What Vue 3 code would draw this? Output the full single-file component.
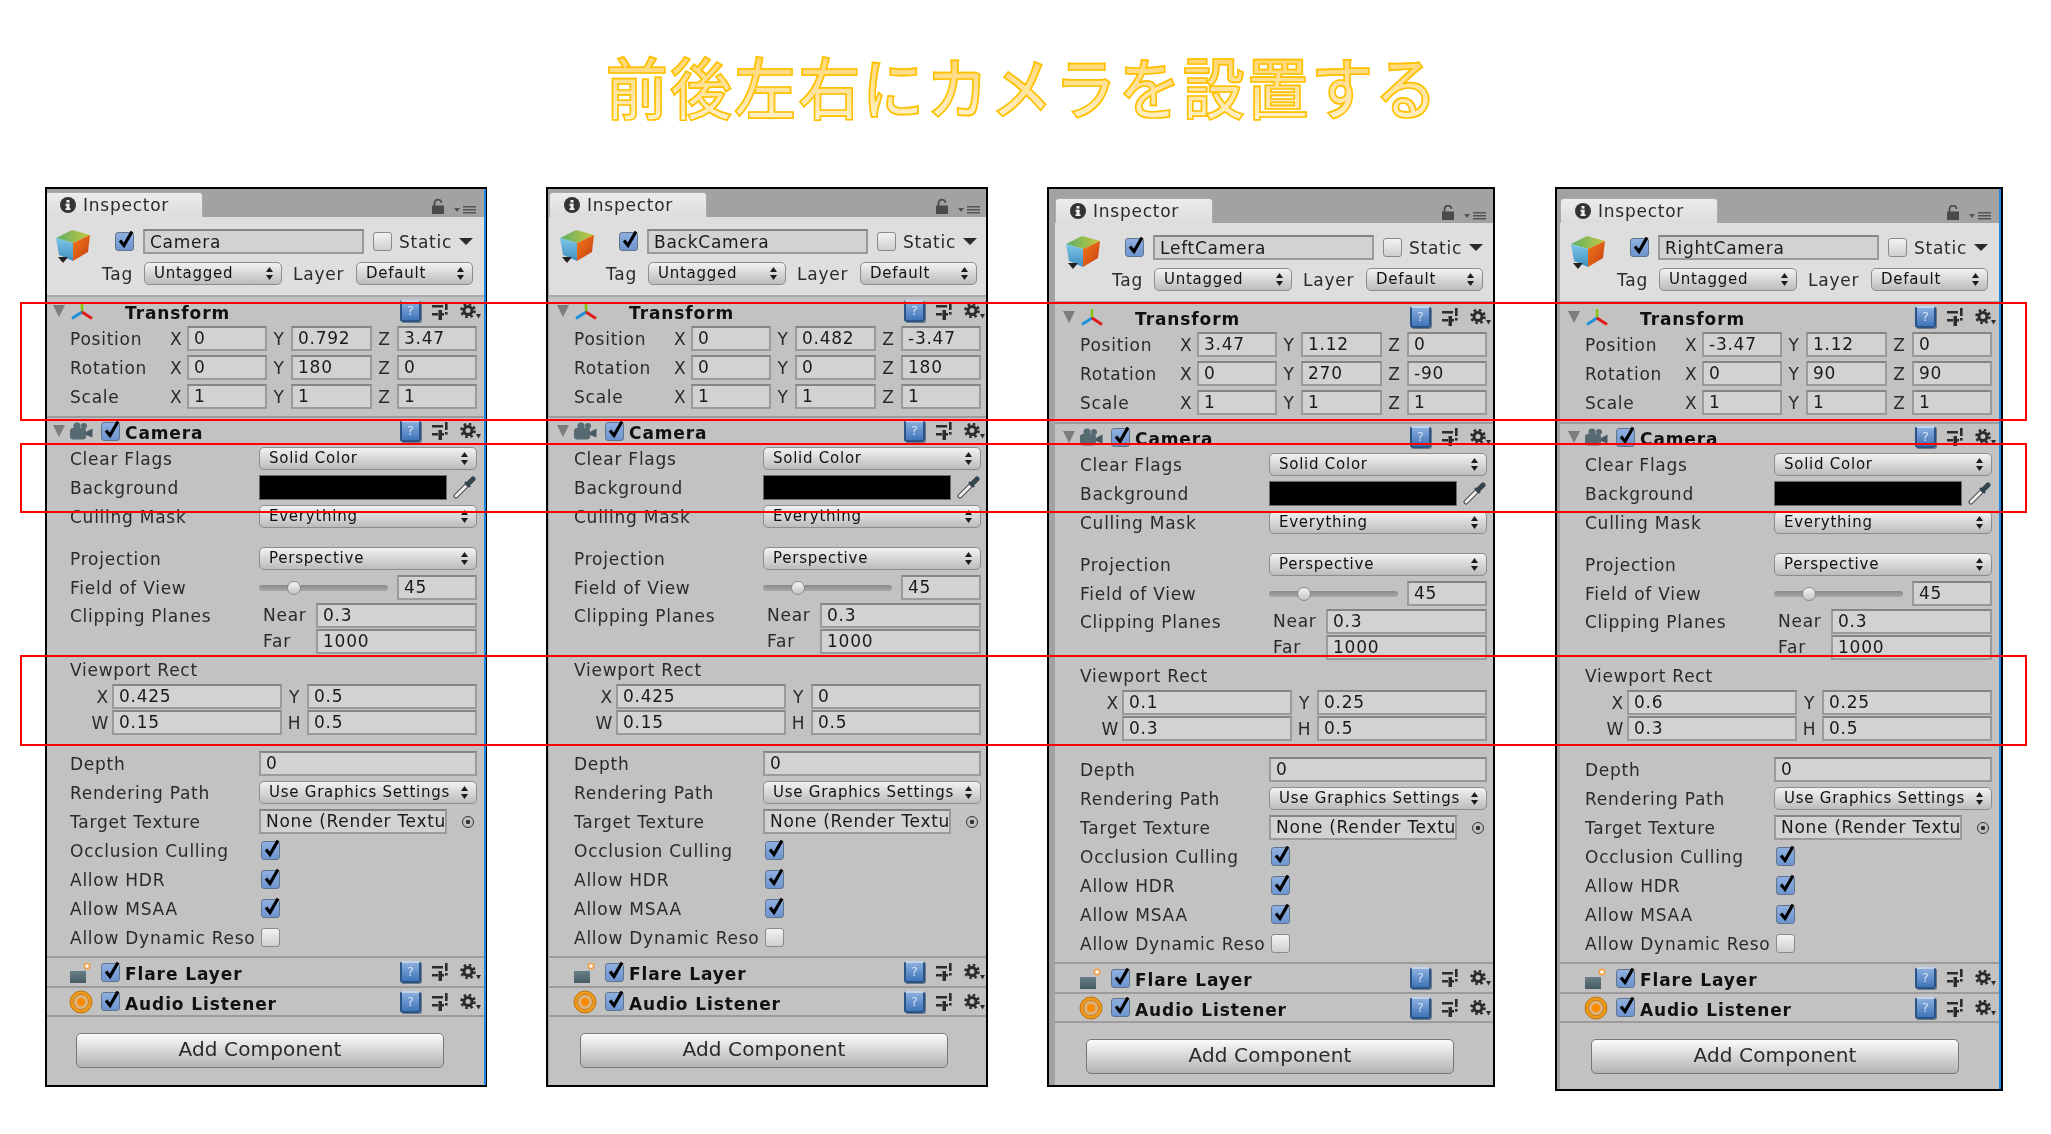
<script setup>
const panels = [
  { cls: 'p1', name: 'Camera', pos: ['0', '0.792', '3.47'], rot: ['0', '180', '0'], rect: ['0.425', '0.5', '0.15', '0.5'] },
  { cls: 'p2', name: 'BackCamera', pos: ['0', '0.482', '-3.47'], rot: ['0', '0', '180'], rect: ['0.425', '0', '0.15', '0.5'] },
  { cls: 'p3', name: 'LeftCamera', pos: ['3.47', '1.12', '0'], rot: ['0', '270', '-90'], rect: ['0.1', '0.25', '0.3', '0.5'] },
  { cls: 'p4', name: 'RightCamera', pos: ['-3.47', '1.12', '0'], rot: ['0', '90', '90'], rect: ['0.6', '0.25', '0.3', '0.5'] },
]
const axes = ['X', 'Y', 'Z']
const vectors = (p) => [
  { label: 'Position', values: p.pos },
  { label: 'Rotation', values: p.rot },
  { label: 'Scale', values: ['1', '1', '1'] },
]
const toggles = [
  { label: 'Occlusion Culling', on: true },
  { label: 'Allow HDR', on: true },
  { label: 'Allow MSAA', on: true },
  { label: 'Allow Dynamic Reso', on: false },
]
</script>

<template>
  <div class="page">
    <svg class="sprite" width="0" height="0">
      <defs>
        <linearGradient id="cubeTop" x1="0" y1="0" x2="1" y2="0"><stop offset="0" stop-color="#5fae6a" /><stop offset="1" stop-color="#c3c83a" /></linearGradient>
        <linearGradient id="cubeLeft" x1="0" y1="0" x2="0" y2="1"><stop offset="0" stop-color="#7cc6e8" /><stop offset="1" stop-color="#3f8fc0" /></linearGradient>
        <linearGradient id="cubeRight" x1="0" y1="0" x2="1" y2="1"><stop offset="0" stop-color="#f07a1c" /><stop offset="1" stop-color="#c93d10" /></linearGradient>
        <linearGradient id="flareBox" x1="0" y1="0" x2="0" y2="1"><stop offset="0" stop-color="#6b7f88" /><stop offset="1" stop-color="#465a62" /></linearGradient>
      </defs>
      <symbol id="cube" viewBox="0 0 35 33">
        <polygon points="1,8 17,0 35,5 18,13" fill="url(#cubeTop)" />
        <polygon points="1,8 18,13 18,31 4,25" fill="url(#cubeLeft)" />
        <polygon points="18,13 35,5 33,22 18,31" fill="url(#cubeRight)" />
        <polygon points="3,27 13,27 8,33" fill="#222" />
      </symbol>
      <symbol id="sliders" viewBox="0 0 16 18">
        <rect x="0" y="3" width="11" height="2.5" fill="#2b2b2b" />
        <rect x="13" y="0" width="2.6" height="8" fill="#2b2b2b" />
        <rect x="13" y="10" width="2.6" height="2.6" fill="#2b2b2b" />
        <rect x="0" y="11" width="6" height="2.5" fill="#2b2b2b" />
        <rect x="6.5" y="8" width="3.5" height="10" fill="#2b2b2b" />
        <rect x="10" y="11" width="2" height="2.5" fill="#2b2b2b" />
      </symbol>
      <symbol id="gear" viewBox="0 0 21 16">
        <circle cx="8" cy="7.5" r="4" fill="none" stroke="#2b2b2b" stroke-width="3" />
        <circle cx="8" cy="7.5" r="6.5" fill="none" stroke="#2b2b2b" stroke-width="2.6" stroke-dasharray="2.5 2.6" />
        <polygon points="16,11 21,11 18.5,15.5" fill="#2b2b2b" />
      </symbol>
      <symbol id="axes" viewBox="0 0 22 18">
        <line x1="11" y1="1" x2="11" y2="10" stroke="#86c400" stroke-width="2.4" />
        <line x1="11" y1="10" x2="1" y2="16.5" stroke="#1d8fe0" stroke-width="2.8" />
        <line x1="11" y1="10" x2="21" y2="16.5" stroke="#e01818" stroke-width="2.8" />
      </symbol>
      <symbol id="cam" viewBox="0 0 24 18">
        <circle cx="8" cy="4" r="3.6" fill="#566a72" />
        <circle cx="15" cy="4" r="3" fill="#566a72" />
        <rect x="1" y="6" width="16" height="11.5" rx="3" fill="#566a72" />
        <polygon points="17,10 23.5,6.5 23.5,15.5 17,13" fill="#465a62" />
      </symbol>
      <symbol id="flare" viewBox="0 0 21 21">
        <rect x="0" y="9" width="16" height="12" fill="url(#flareBox)" />
        <circle cx="17" cy="4" r="3.6" fill="#f2a04a" />
        <circle cx="17" cy="4" r="1.8" fill="#fff" />
      </symbol>
      <symbol id="audio" viewBox="0 0 24 24">
        <circle cx="12" cy="12" r="11" fill="#f09a1c" stroke="#b9760f" stroke-width="1" />
        <circle cx="12" cy="12" r="7.6" fill="#dcb27a" stroke="#c47f20" stroke-width="1" />
        <circle cx="12" cy="12" r="4" fill="#ff8a00" />
      </symbol>
      <symbol id="dropper" viewBox="0 0 23 23">
        <line x1="3" y1="20" x2="14" y2="9" stroke="#555" stroke-width="5" stroke-linecap="round" />
        <line x1="3" y1="20" x2="14" y2="9" stroke="#f2f2f2" stroke-width="2.6" stroke-linecap="round" />
        <line x1="15" y1="8" x2="20" y2="3" stroke="#33444e" stroke-width="5" stroke-linecap="round" />
        <line x1="12" y1="6" x2="17" y2="11" stroke="#33444e" stroke-width="2.4" />
      </symbol>
      <symbol id="updown" viewBox="0 0 7 13">
        <polygon points="3.5,0 7,5 0,5" fill="#1c1c1c" />
        <polygon points="0,8 7,8 3.5,13" fill="#1c1c1c" />
      </symbol>
      <symbol id="tick" viewBox="0 0 19 19">
        <path d="M4 9.5 L8 14.5 L16 0.5" fill="none" stroke="#000" stroke-width="3.2" />
      </symbol>
    </svg>

    <div class="title-row">
      <h1 class="title">前後左右にカメラを設置する</h1>
    </div>

    <div class="panels">
      <section v-for="p in panels" :key="p.name" class="panel" :class="p.cls">
        <div class="inner">
          <div class="tabbar">
            <div class="tab">
              <svg class="info" viewBox="0 0 16 16">
                <circle cx="8" cy="8" r="8" fill="#333" />
                <rect x="6.5" y="3" width="3" height="2.6" fill="#eee" />
                <rect x="5.5" y="6.8" width="4" height="2" fill="#eee" />
                <rect x="6.5" y="6.8" width="3" height="6" fill="#eee" />
                <rect x="5.5" y="11.2" width="5" height="1.8" fill="#eee" />
              </svg>
              <span>Inspector</span>
            </div>
            <svg class="lock" viewBox="0 0 12 15">
              <path d="M2.5 7 V4 a3.5 3.5 0 0 1 7 0" fill="none" stroke="#4a4a4a" stroke-width="1.8" />
              <rect x="0" y="6.5" width="12" height="8.5" fill="#4a4a4a" />
            </svg>
            <svg class="menu" viewBox="0 0 22 8">
              <polygon points="0,2 6,2 3,6" fill="#555" />
              <rect x="9" y="0" width="13" height="1.5" fill="#555" />
              <rect x="9" y="3" width="13" height="1.5" fill="#555" />
              <rect x="9" y="6" width="13" height="1.5" fill="#555" />
            </svg>
          </div>

          <div class="head">
            <svg class="cube"><use href="#cube" /></svg>
            <div class="head-rows">
              <div class="head-row first">
                <span class="check on"><svg><use href="#tick" /></svg></span>
                <div class="field name">{{ p.name }}</div>
                <span class="check"></span>
                <span class="static">Static</span>
                <span class="down"></span>
              </div>
              <div class="head-row second">
                <span class="tag">Tag</span>
                <div class="select tag-select">Untagged<svg class="updown"><use href="#updown" /></svg></div>
                <span class="layer">Layer</span>
                <div class="select layer-select">Default<svg class="updown"><use href="#updown" /></svg></div>
              </div>
            </div>
          </div>

          <div class="comp first-comp">
            <span class="fold"></span>
            <svg class="ico-axes"><use href="#axes" /></svg>
            <span></span>
            <span class="comp-name">Transform</span>
            <span class="ico-help">?</span>
            <svg class="ico-sliders"><use href="#sliders" /></svg>
            <svg class="ico-gear"><use href="#gear" /></svg>
          </div>
          <div v-for="v in vectors(p)" :key="v.label" class="vec">
            <span>{{ v.label }}</span>
            <template v-for="(val, i) in v.values" :key="i">
              <span class="axis" :class="'axis-' + axes[i]">{{ axes[i] }}</span>
              <div class="field">{{ val }}</div>
            </template>
          </div>

          <div class="sep sep-transform"></div>

          <div class="comp">
            <span class="fold"></span>
            <svg class="ico-cam"><use href="#cam" /></svg>
            <span class="check on"><svg><use href="#tick" /></svg></span>
            <span class="comp-name">Camera</span>
            <span class="ico-help">?</span>
            <svg class="ico-sliders"><use href="#sliders" /></svg>
            <svg class="ico-gear"><use href="#gear" /></svg>
          </div>
          <div class="row"><span>Clear Flags</span><div class="select">Solid Color<svg class="updown"><use href="#updown" /></svg></div></div>
          <div class="row">
            <span>Background</span>
            <div class="color-line"><div class="swatch"></div><svg class="dropper"><use href="#dropper" /></svg></div>
          </div>
          <div class="row gap-below"><span>Culling Mask</span><div class="select">Everything<svg class="updown"><use href="#updown" /></svg></div></div>
          <div class="row"><span>Projection</span><div class="select">Perspective<svg class="updown"><use href="#updown" /></svg></div></div>
          <div class="row">
            <span>Field of View</span>
            <div class="slider-line">
              <div class="track"><span class="thumb"></span></div>
              <div class="field">45</div>
            </div>
          </div>
          <div class="row clip-row">
            <span>Clipping Planes</span>
            <div class="clip-grid">
              <span>Near</span><div class="field">0.3</div>
              <span>Far</span><div class="field">1000</div>
            </div>
          </div>
          <div class="viewport">
            <div class="viewport-title">Viewport Rect</div>
            <div class="viewport-grid">
              <span class="vp-x">X</span><div class="field">{{ p.rect[0] }}</div>
              <span class="vp-y">Y</span><div class="field">{{ p.rect[1] }}</div>
              <span class="vp-x">W</span><div class="field">{{ p.rect[2] }}</div>
              <span class="vp-y">H</span><div class="field">{{ p.rect[3] }}</div>
            </div>
          </div>
          <div class="row"><span>Depth</span><div class="field">0</div></div>
          <div class="row"><span>Rendering Path</span><div class="select">Use Graphics Settings<svg class="updown"><use href="#updown" /></svg></div></div>
          <div class="row">
            <span>Target Texture</span>
            <div class="color-line">
              <div class="field target">None (Render Textu</div>
              <span class="picker"></span>
            </div>
          </div>
          <div v-for="t in toggles" :key="t.label" class="row">
            <span class="nowrap">{{ t.label }}</span>
            <span class="check row-check" :class="{ on: t.on }"><svg v-if="t.on"><use href="#tick" /></svg></span>
          </div>

          <div class="sep sep-first"></div>
          <div class="comp small">
            <span></span>
            <svg class="ico-flare"><use href="#flare" /></svg>
            <span class="check on"><svg><use href="#tick" /></svg></span>
            <span class="comp-name">Flare Layer</span>
            <span class="ico-help">?</span>
            <svg class="ico-sliders"><use href="#sliders" /></svg>
            <svg class="ico-gear"><use href="#gear" /></svg>
          </div>
          <div class="sep"></div>
          <div class="comp small audio">
            <span></span>
            <svg class="ico-audio"><use href="#audio" /></svg>
            <span class="check on"><svg><use href="#tick" /></svg></span>
            <span class="comp-name">Audio Listener</span>
            <span class="ico-help">?</span>
            <svg class="ico-sliders"><use href="#sliders" /></svg>
            <svg class="ico-gear"><use href="#gear" /></svg>
          </div>
          <div class="sep"></div>
          <button class="add">Add Component</button>
        </div>
      </section>
    </div>

    <!-- red marker frames drawn over all four panels -->
    <div class="mark mark-a"></div>
    <div class="mark mark-b"></div>
    <div class="mark mark-c"></div>
  </div>
</template>

<style scoped>
.page {
  position: relative;
  width: 2051px;
  height: 1134px;
  overflow: hidden;
  background: #fff;
  font-family: 'DejaVu Sans', sans-serif;
  font-size: 17px;
  letter-spacing: 0.75px;
  color: #2a2a2a;
}
.sprite {
  position: absolute;
}

.title-row {
  height: 187px;
  box-sizing: border-box;
  padding: 54px 0 0 0;
  text-align: center;
}
.title {
  display: inline-block;
  margin: 0;
  font-family: 'Noto Sans CJK JP', 'Noto Sans CJK SC', sans-serif;
  font-size: 62px;
  font-weight: 500;
  line-height: 62px;
  letter-spacing: 2.1px;
  transform: translateX(-3px) scaleY(1.08);
  background: linear-gradient(#ffd46a, #ffefc4);
  -webkit-background-clip: text;
  background-clip: text;
  color: transparent;
  -webkit-text-stroke: 1.6px #ffc000;
}

.panels {
  display: flex;
  align-items: flex-start;
  padding-left: 45px;
}
.panel {
  box-sizing: border-box;
  height: 900px;
  overflow: hidden;
  flex: none;
  border: 2px solid #000;
  background: #a2a2a2;
  filter: blur(0.55px);
}
.p1 { width: 442px; border-right-width: 1px; }
.p2 { width: 442px; margin-left: 59px; }
.p3 { width: 448px; margin-left: 59px; }
.p4 { width: 448px; margin-left: 60px; height: 904px; }

.inner {
  width: 439px;
  height: 100%;
  background: #c2c2c2;
}
.p1 .inner { margin-left: -2px; box-shadow: 2px 0 0 #1e88e5; }
.p2 .inner { margin-left: 1px; }
.p3 .inner { margin-left: 6px; }
.p4 .inner { margin-left: 3px; box-shadow: 2px 0 0 #1e88e5; }

.tabbar {
  display: flex;
  align-items: flex-end;
  box-sizing: border-box;
  height: 28px;
  padding: 3px 8px 0 0;
  background: #a2a2a2;
}
.p3 .tabbar,
.p4 .tabbar {
  height: 34px;
  padding-top: 9px;
}
.tab {
  display: flex;
  align-items: center;
  gap: 7px;
  box-sizing: border-box;
  width: 158px;
  height: 25px;
  padding-left: 14px;
  border: 1px solid #aaa;
  border-bottom: 0;
  border-radius: 4px 4px 0 0;
  background: linear-gradient(#ececec, #dcdcdc);
}
.info { width: 16px; height: 16px; flex: none; }
.lock { width: 12px; height: 15px; margin: 0 10px 3px auto; }
.menu { width: 22px; height: 8px; margin-bottom: 3px; }

.head {
  display: flex;
  box-sizing: border-box;
  height: 78px;
  padding: 13px 0 0 10px;
  background: #dedede;
}
.cube { width: 35px; height: 33px; flex: none; }
.head-rows { margin: -1px 0 0 10px; }
.head-row { display: flex; align-items: center; }
.head-row.first { height: 25px; padding-left: 15px; gap: 9px; }
.head-row.second { height: 23px; margin-top: 8px; padding-left: 2px; }
.name { width: 221px; padding-top: 1px; }
.static { margin-left: -2px; width: 54px; }
.down {
  width: 0;
  height: 0;
  margin-left: -3px;
  border: 7px solid transparent;
  border-top: 7px solid #2b2b2b;
  border-bottom: 0;
}
.tag { width: 42px; }
.tag-select { width: 138px; }
.layer { width: 63px; margin-left: 11px; }
.layer-select { width: 117px; }

.comp {
  display: grid;
  grid-template-columns: 16px 32px 24px 1fr 32px 28px 24px;
  align-items: center;
  box-sizing: border-box;
  height: 26px;
  padding-left: 8px;
}
.first-comp {
  height: 29px;
  border-top: 2px solid #a8a8a8;
}
.first-comp .comp-name { padding-top: 5px; }
.comp.small { height: 28px; }
.comp.audio { height: 27px; }
.audio .comp-name { padding-top: 5px; }
.fold {
  width: 0;
  height: 0;
  border: 6.5px solid transparent;
  border-top: 12px solid #7c7c7c;
  border-bottom: 0;
}
.comp-name {
  padding-top: 3px;
  font-weight: 700;
  letter-spacing: 0.9px;
  color: #111;
}
.ico-axes { width: 22px; height: 18px; margin-left: 2px; }
.ico-cam { width: 24px; height: 18px; }
.ico-flare { width: 21px; height: 21px; margin-left: 1px; }
.ico-audio { width: 24px; height: 24px; }
.ico-help {
  box-sizing: border-box;
  width: 21px;
  height: 22px;
  border: 2px solid #2a5386;
  border-top-color: #c4d4e8;
  border-radius: 2px 3px 3px 3px;
  background: linear-gradient(#8aaedd, #3f74b8);
  box-shadow: 1px 1px 0 #6d7a88;
  font-size: 13px;
  line-height: 18px;
  letter-spacing: 0;
  text-align: center;
  color: #cfe0f4;
}
.ico-sliders { width: 16px; height: 18px; }
.ico-gear { width: 21px; height: 16px; }

.check {
  position: relative;
  display: block;
  box-sizing: border-box;
  width: 19px;
  height: 19px;
  flex: none;
  border: 1.5px solid #8a8a8a;
  border-radius: 3px;
  background: linear-gradient(#f2f2f2, #cfcfcf);
}
.check.on {
  border-color: #62748c;
  background: linear-gradient(#8fb0e0, #6e95cf);
}
.check svg {
  position: absolute;
  left: 0;
  top: -2px;
  width: 19px;
  height: 19px;
}
.row-check { margin-left: 2px; }

.field {
  box-sizing: border-box;
  height: 25px;
  padding-left: 5px;
  border: 2px solid #9a9a9a;
  border-top-color: #858585;
  background: #d2d2d2;
  line-height: 21px;
  color: #1a1a1a;
  white-space: nowrap;
}
.select {
  position: relative;
  box-sizing: border-box;
  height: 23px;
  padding-left: 9px;
  border: 1.5px solid #8c8c8c;
  border-radius: 5px;
  background: linear-gradient(#f2f2f2, #bcbcbc);
  font-size: 15px;
  line-height: 21px;
  color: #111;
}
.updown {
  position: absolute;
  right: 8px;
  top: 4px;
  width: 7px;
  height: 13px;
}

.vec {
  display: grid;
  grid-template-columns: 100px 17px 80px 24px 81px 25px 80px;
  align-items: center;
  height: 29px;
  padding-left: 25px;
}
.axis { text-align: center; }
.axis-X { padding-right: 6px; }
.sep-transform { margin-top: 5px; }
.sep {
  height: 2px;
  background: #9c9c9c;
}
.sep-first { margin-top: 4px; }

.row {
  display: grid;
  grid-template-columns: 189px 1fr;
  align-items: center;
  height: 29px;
  padding: 0 7px 0 25px;
}
.gap-below { margin-bottom: 13px; }
.nowrap { white-space: nowrap; }

.color-line {
  display: grid;
  grid-template-columns: 188px 1fr;
  align-items: center;
}
.swatch {
  box-sizing: border-box;
  height: 25px;
  border: 1.5px solid #6a6a6a;
  background: #000;
}
.dropper { width: 23px; height: 23px; margin-left: 6px; }
.target { letter-spacing: 0.7px; }
.picker {
  box-sizing: border-box;
  width: 12px;
  height: 12px;
  margin-left: 15px;
  border: 1.5px solid #333;
  border-radius: 50%;
  background: radial-gradient(#333 0 2px, transparent 2.5px);
}

.slider-line {
  display: grid;
  grid-template-columns: 129px 1fr;
  column-gap: 9px;
  align-items: center;
}
.track {
  position: relative;
  height: 6px;
  border-radius: 3px;
  background: linear-gradient(#8a8a8a, #a8a8a8);
}
.thumb {
  position: absolute;
  left: 28px;
  top: -4px;
  box-sizing: border-box;
  width: 14px;
  height: 14px;
  border: 1px solid #8a8a8a;
  border-radius: 50%;
  background: linear-gradient(#f4f4f4, #c4c4c4);
}

.clip-row {
  align-items: start;
  height: 54px;
  line-height: 29px;
}
.clip-grid {
  display: grid;
  grid-template-columns: 57px 1fr;
  row-gap: 1px;
  padding-top: 1px;
  align-items: center;
  line-height: 25px;
}
.clip-grid .field { line-height: 21px; }
.clip-grid span { padding-left: 4px; }

.viewport { padding: 0 7px 0 25px; margin-bottom: 14px; }
.viewport-title { height: 28px; line-height: 29px; }
.viewport-grid {
  display: grid;
  grid-template-columns: 42px 170px 25px 170px;
  row-gap: 1px;
  align-items: center;
}
.vp-x { text-align: right; padding-right: 3px; }
.vp-y { text-align: center; }

.add {
  display: block;
  box-sizing: border-box;
  width: 368px;
  height: 35px;
  margin: 16px 0 0 31px;
  padding: 0 0 4px;
  border: 1.5px solid #777;
  border-radius: 5px;
  background: linear-gradient(#fbfbfb, #b4b2b2);
  font-family: inherit;
  font-size: 20px;
  letter-spacing: 0.15px;
  color: #2a2a2a;
}

.mark {
  position: absolute;
  left: 20px;
  width: 2007px;
  box-sizing: border-box;
  border: 2px solid #f00;
  pointer-events: none;
}
.mark-a { top: 302px; height: 119px; }
.mark-b { top: 443px; height: 70px; }
.mark-c { top: 655px; height: 91px; }
</style>
